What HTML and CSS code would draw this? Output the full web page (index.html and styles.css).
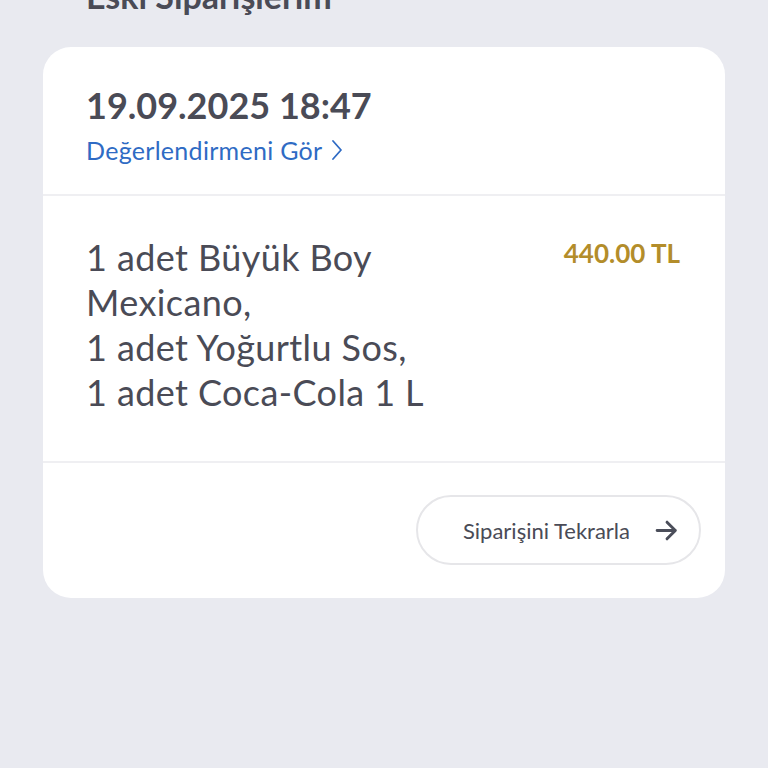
FILE: index.html
```html
<!DOCTYPE html>
<html lang="tr">
<head>
<meta charset="utf-8">
<link rel="stylesheet" href="styles.css">
</head>
<body>
<div class="page">
  <h1 class="title">Eski Siparişlerim</h1>
  <div class="card">
    <div class="card-head">
      <div class="date">19.09.2025 18:47</div>
      <a class="review" href="#">Değerlendirmeni Gör
        <svg class="chev" width="14" height="24" viewBox="0 0 14 24"><path d="M3 3 L11 12 L3 21" fill="none" stroke="#2f6bc4" stroke-width="1.8" stroke-linecap="round" stroke-linejoin="round"/></svg>
      </a>
    </div>
    <div class="card-body">
      <div class="items">1 adet Büyük Boy Mexicano,<br>1 adet Yoğurtlu Sos,<br>1 adet Coca-Cola 1 L</div>
      <div class="price">440.00 TL</div>
    </div>
    <div class="card-foot">
      <button class="repeat">
        <span>Siparişini Tekrarla</span>
        <svg width="25" height="25" viewBox="0 0 24 24"><path d="M3 12 H20.5 M12.5 4 L20.5 12 L12.5 20" fill="none" stroke="#4b4e5a" stroke-width="2.8" stroke-linecap="round" stroke-linejoin="round"/></svg>
      </button>
    </div>
  </div>
</div>
</body>
</html>
```
FILE: styles.css
```css
html, body {
  margin: 0;
  padding: 0;
  background: #e9eaf0;
  font-family: "Lato", "Noto Sans", sans-serif;
  color: #4a4b56;
}
.page {
  padding: 0 43px;
}
.title {
  margin: -24px 0 0 43px;
  font-size: 34px;
  font-weight: 700;
  line-height: 40px;
  height: 40px;
  color: #4a4b56;
}
.card {
  margin-top: 31px;
  background: #fff;
  border-radius: 28px;
  overflow: hidden;
}
.card-head {
  padding: 33px 43px 0;
  height: 114px;
  border-bottom: 2px solid #efeff2;
}
.date {
  font-size: 36px;
  font-weight: 700;
  line-height: 50px;
  letter-spacing: 0;
}
.review {
  display: inline-flex;
  align-items: center;
  gap: 7px;
  margin-top: 2px;
  font-size: 25px;
  line-height: 36px;
  letter-spacing: 0.3px;
  color: #2f6bc4;
  text-decoration: none;
}
.card-body {
  display: flex;
  justify-content: space-between;
  padding: 39px 45px 0 43px;
  height: 226px;
  border-bottom: 2px solid #efeff2;
}
.items {
  width: 440px;
  font-size: 36px;
  line-height: 45px;
  letter-spacing: 0.4px;
  color: #4a4b56;
}
.price {
  font-size: 26px;
  font-weight: 700;
  line-height: 36px;
  color: #b38d2a;
}
.card-foot {
  display: flex;
  justify-content: flex-end;
  padding: 32px 24px 33px;
}
.repeat {
  display: flex;
  align-items: center;
  gap: 24px;
  height: 70px;
  padding: 0 20px 0 45px;
  border: 2px solid #e6e6e9;
  border-radius: 35px;
  background: #fff;
  font-family: inherit;
  font-size: 22px;
  color: #4a4b56;
}
```
